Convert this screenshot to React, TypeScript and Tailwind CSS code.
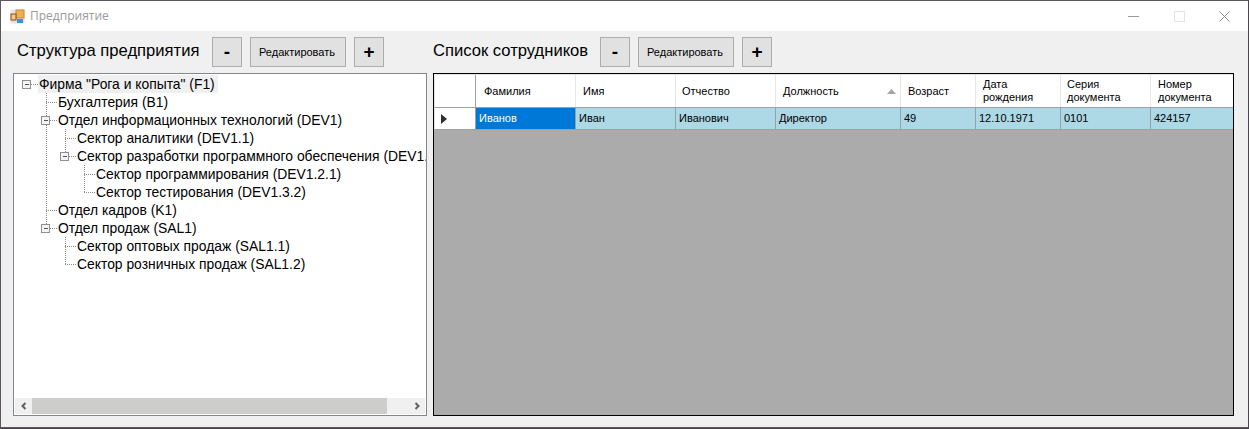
import React from 'react';

// --- Tree data ---
// level = indent depth, through = x of guides that pass this row, last = connector stops at this row
type Node = {
  label: string;
  level: number;
  box?: boolean;
  through: number[];
  last?: boolean;
};

const TREE: Node[] = [
  { label: 'Фирма "Рога и копыта" (F1)', level: 0, box: true, through: [] },
  { label: 'Бухгалтерия (B1)', level: 1, through: [] },
  { label: 'Отдел информационных технологий (DEV1)', level: 1, box: true, through: [] },
  { label: 'Сектор аналитики (DEV1.1)', level: 2, through: [46] },
  { label: 'Сектор разработки программного обеспечения (DEV1.2)', level: 2, box: true, through: [46], last: true },
  { label: 'Сектор программирования (DEV1.2.1)', level: 3, through: [46] },
  { label: 'Сектор тестирования (DEV1.3.2)', level: 3, through: [46], last: true },
  { label: 'Отдел кадров (K1)', level: 1, through: [] },
  { label: 'Отдел продаж (SAL1)', level: 1, box: true, through: [], last: true },
  { label: 'Сектор оптовых продаж (SAL1.1)', level: 2, through: [] },
  { label: 'Сектор розничных продаж (SAL1.2)', level: 2, through: [], last: true },
];

const COLUMNS = [
  { title: ['Фамилия'], width: 'w-[100px]', pad: 'pl-[8px]', value: 'Иванов' },
  { title: ['Имя'], width: 'w-[100px]', pad: 'pl-[7px]', value: 'Иван' },
  { title: ['Отчество'], width: 'w-[100px]', pad: 'pl-[6px]', value: 'Иванович' },
  { title: ['Должность'], width: 'w-[125px]', pad: 'pl-[7px]', value: 'Директор', sorted: true },
  { title: ['Возраст'], width: 'w-[75px]', pad: 'pl-[7px]', value: '49' },
  { title: ['Дата', 'рождения'], width: 'w-[85px]', pad: 'pl-[7px]', value: '12.10.1971' },
  { title: ['Серия', 'документа'], width: 'w-[90px]', pad: 'pl-[6px]', value: '0101' },
  { title: ['Номер', 'документа'], width: 'w-[82px]', pad: 'pl-[7px]', value: '424157' },
];

const ToolButton = ({ label, wide }: { label: string; wide?: boolean }) => (
  <button
    className={`flex h-[30px] items-center justify-center border border-[#adadad] bg-[#e1e1e1] text-black ${
      wide ? 'w-[96px] pr-[2px] text-[11px]' : 'w-[30px] text-[19px] font-bold'
    }`}>
    {label}
  </button>
);

const TreeGuides = ({ node }: { node: Node }) => {
  // x values are window coordinates, the box content starts at x = 14
  const cx = 27 + node.level * 19;
  const width = 24 + node.level * 19;
  const dots = 'stroke-[#8c8c8c]';
  return (
    <svg width={width} height={18} viewBox={`14 0 ${width} 18`} className="shrink-0" shapeRendering="crispEdges">
      {node.through.map((x) => (
        <line key={x} x1={x + 0.5} y1={0} x2={x + 0.5} y2={18} className={dots} strokeDasharray="1 1" />
      ))}
      {node.level > 0 && (
        <line x1={cx + 0.5} y1={0} x2={cx + 0.5} y2={node.last ? 9 : 18} className={dots} strokeDasharray="1 1" />
      )}
      <line x1={cx} y1={9.5} x2={cx + 11} y2={9.5} className={dots} strokeDasharray="1 1" />
      {node.box && (
        <g>
          <rect x={cx - 4.5} y={5.5} width={8} height={8} fill="#f4f4f4" stroke="#8f8f8f" />
          <line x1={cx - 2} y1={9.5} x2={cx + 2} y2={9.5} stroke="#555" />
        </g>
      )}
    </svg>
  );
};

const TreePanel = () => (
  <div className="flex h-[343px] w-[414px] flex-col border border-[#82878f] bg-white text-[13.86px]">
    <div className="min-h-0 flex-1 overflow-hidden pt-[1px]">
      {TREE.map((node, i) => (
        <div key={i} className="flex h-[18px] items-center whitespace-nowrap">
          <TreeGuides node={node} />
          <span className={`flex h-[18px] items-center pl-[1px] pr-[3px] ${i === 0 ? 'bg-[#f0f0f0]' : ''}`}>
            {node.label}
          </span>
        </div>
      ))}
    </div>
    <div className="mx-[1px] mb-[1px] flex h-[16px] items-center bg-[#f0f0f0]">
      <div className="flex h-full w-[17px] items-center justify-center">
        <svg width="8" height="8" viewBox="0 0 8 8">
          <path d="M5.5 1 2.5 4l3 3" fill="none" stroke="#5f5f5f" strokeWidth="2" />
        </svg>
      </div>
      <div className="h-full w-[355px] bg-[#cdcdcc]" />
      <div className="flex-1" />
      <div className="flex h-full w-[17px] items-center justify-center">
        <svg width="8" height="8" viewBox="0 0 8 8">
          <path d="M2.5 1l3 3-3 3" fill="none" stroke="#5f5f5f" strokeWidth="2" />
        </svg>
      </div>
    </div>
  </div>
);

const EmployeesGrid = () => (
  <div className="flex h-[343px] w-[801px] flex-col border border-black bg-[#ababab] text-[11px] leading-[13px]">
    {/* HEADER */}
    <div className="flex h-[34px] border-b border-l border-t border-b-[#a0a0a0] border-l-[#e4e4e4] border-t-[#e4e4e4] bg-white">
      <div className="w-[41px] shrink-0 border-r border-[#a0a0a0]" />
      {COLUMNS.map((col) => (
        <div
          key={col.title[0]}
          className={`${col.width} ${col.pad} relative flex shrink-0 flex-col justify-center border-r border-[#e6e6e6] last:border-r-0`}>
          {col.title.map((line) => (
            <span key={line}>{line}</span>
          ))}
          {col.sorted && (
            <svg width="9" height="5" viewBox="0 0 9 5" className="absolute right-[4px] top-[14px]">
              <path d="M4.5 0 9 5H0z" fill="#a6a6a6" />
            </svg>
          )}
        </div>
      ))}
    </div>
    {/* ROW */}
    <div className="flex h-[22px] border-b border-l border-b-[#a0a0a0] border-l-[#e4e4e4] bg-[#add8e6]">
      <div className="flex w-[41px] shrink-0 items-center border-r border-[#a0a0a0] bg-white pl-[6px]">
        <svg width="6" height="10" viewBox="0 0 6 10">
          <path d="M0 0l6 5-6 5z" fill="#2f2f2f" />
        </svg>
      </div>
      {COLUMNS.map((col, i) => (
        <div
          key={col.value}
          className={`${col.width} flex shrink-0 items-center border-r border-[#8fa5ae] pl-[3px] last:border-r-0 ${
            i === 0 ? 'bg-[#0078d7] text-white' : ''
          }`}>
          {col.value}
        </div>
      ))}
    </div>
  </div>
);

const App: React.FC = () => {
  return (
    <div className="h-[429px] w-[1249px] overflow-hidden bg-[#4a4550] pr-[1px] pb-[1px] font-['Liberation_Sans',sans-serif] text-[14px] text-black">
      <div className="flex h-[428px] w-[1248px] flex-col border border-[#5d5560] border-r-0 bg-[#f0f0f0]">
        {/* TITLE BAR */}
        <div className="flex h-[30px] shrink-0 items-center bg-white pl-[9px] pr-[18px]">
          <svg width="15" height="15" viewBox="0 0 15 15" className="shrink-0">
            <rect x="0.5" y="0.5" width="14" height="14" fill="#e4e4e4" />
            <rect x="6" y="1" width="8" height="8" fill="#f0b050" stroke="#c98a30" />
            <rect x="1" y="5" width="5" height="6" fill="#f3c98b" stroke="#8a4a12" />
            <rect x="7" y="10" width="6" height="4" fill="#3d8fdc" />
          </svg>
          <span className="ml-[5px] font-['Open_Sans',sans-serif] text-[12px] text-[#9b9b9b]">Предприятие</span>
          <div className="ml-auto flex items-center gap-[34px]">
            <svg width="11" height="11" viewBox="0 0 11 11">
              <path d="M0 5.5h11" stroke="#9a9a9a" />
            </svg>
            <svg width="11" height="11" viewBox="0 0 11 11" className="ml-[1px]">
              <rect x="0.5" y="0.5" width="10" height="10" fill="none" stroke="#e3e3e3" />
            </svg>
            <svg width="11" height="11" viewBox="0 0 11 11">
              <path d="M0.5 0.5l10 10M10.5 0.5l-10 10" stroke="#8f8f8f" />
            </svg>
          </div>
        </div>

        {/* BODY */}
        <div className="flex gap-[6px] pl-[12px] pt-[6px]">
          <div className="flex flex-col gap-[6px]">
            <div className="flex items-center gap-[8px]">
              <h2 className="w-[191px] pb-[2px] pl-[4px] text-[16.6px] font-normal whitespace-nowrap">Структура предприятия</h2>
              <ToolButton label="-" />
              <ToolButton label="Редактировать" wide />
              <ToolButton label="+" />
            </div>
            <TreePanel />
          </div>
          <div className="flex flex-col gap-[6px]">
            <div className="flex items-center gap-[8px]">
              <h2 className="w-[159px] pb-[2px] text-[16.6px] font-normal whitespace-nowrap">Список сотрудников</h2>
              <ToolButton label="-" />
              <ToolButton label="Редактировать" wide />
              <ToolButton label="+" />
            </div>
            <EmployeesGrid />
          </div>
        </div>
      </div>
    </div>
  );
};

export default App;
